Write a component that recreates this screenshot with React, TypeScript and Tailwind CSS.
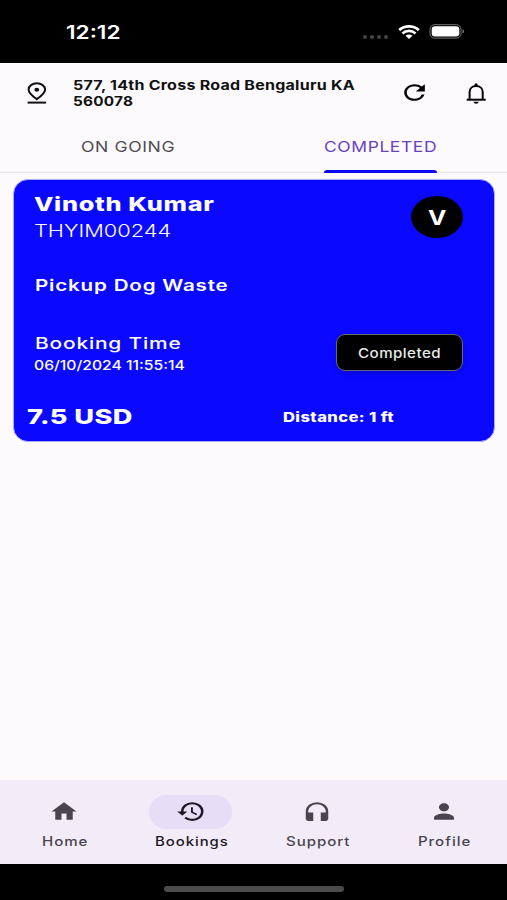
import { useLayoutEffect, useRef, useState } from "react";
import { MdHeadphones, MdHistory, MdHome, MdPerson, MdRefresh } from "react-icons/md";

// Text set in an extended width: the line is stretched to fill its box.
function WideText({ text, className }: { text: string; className: string }) {
  const box = useRef<HTMLSpanElement>(null);
  const inner = useRef<HTMLSpanElement>(null);
  const [scale, setScale] = useState(1);

  useLayoutEffect(() => {
    if (box.current && inner.current) {
      setScale(box.current.offsetWidth / inner.current.offsetWidth);
    }
  }, [text]);

  return (
    <span ref={box} className={`flex shrink-0 whitespace-nowrap ${className}`}>
      <span ref={inner} className="shrink-0 origin-left" style={{ transform: `scaleX(${scale})` }}>
        {text}
      </span>
    </span>
  );
}

function StatusBar() {
  return (
    <div className="flex h-[63px] shrink-0 items-center bg-black pl-[66px] pr-[42px] text-white">
      <WideText text="12:12" className="mt-[2px] w-[54px] text-[18px] font-semibold leading-6" />
      <div className="ml-auto flex items-center">
        <div className="mr-[10px] mt-[10px] flex gap-[3px]">
          {[0, 1, 2, 3].map((i) => (
            <span key={i} className="h-1 w-1 rounded-full bg-[#444444]" />
          ))}
        </div>
        <svg className="mr-[9px] h-[14px] w-[22px]" viewBox="0 0 22 14" fill="none" stroke="white" strokeWidth="2.8">
          <path d="M1.2 5.1C6.8 .2 15.2 .2 20.8 5.1" />
          <path d="M4.5 8.5C8.2 5.1 13.8 5.1 17.5 8.5" />
          <path d="M7.5 10.8C9.6 9 12.4 9 14.5 10.8L11 14Z" fill="white" stroke="none" />
        </svg>
        <svg className="h-[15px] w-9" viewBox="0 0 36 15">
          <rect x="1" y=".7" width="31" height="13.4" rx="4.5" fill="none" stroke="#777777" />
          <rect x="2.7" y="2.2" width="27.6" height="10.4" rx="3.3" fill="white" />
          <path d="M33.5 5.3c2 .6 2 3.6 0 4.2z" fill="#777777" />
        </svg>
      </div>
    </div>
  );
}

function PinIcon() {
  return (
    <svg className="h-[22px] w-5" viewBox="0 0 20 22" fill="none" stroke="currentColor" strokeWidth="2">
      <path d="M9.8 17.2C5 14 1.6 10.8 1.6 7.6C1.6 4 5.2 1.3 9.8 1.3S18.1 4 18.1 7.6C18.1 10.8 14.6 14 9.8 17.2Z" />
      <path d="M.6 20.6H19.1" />
      <ellipse cx="9.8" cy="7.7" rx="2.4" ry="2" fill="currentColor" stroke="none" />
    </svg>
  );
}

function BellIcon() {
  return (
    <svg className="h-[21px] w-5" viewBox="0 0 20 21" fill="none" stroke="currentColor" strokeWidth="2">
      <path d="M3.6 16.4V9C3.6 5.4 6.3 3.1 10.1 3.1S16.7 5.4 16.7 9V16.4" />
      <path d="M.7 16.7H19.7" />
      <circle cx="10.1" cy="1.9" r="1.6" fill="currentColor" stroke="none" />
      <path d="M7.6 18.8h5.1c0 2.6-5.1 2.6-5.1 0z" fill="currentColor" stroke="none" />
    </svg>
  );
}

function Header() {
  return (
    <header className="flex h-[57px] shrink-0 items-center pl-[27px] pr-[21px] pt-[3px] text-[#111111]">
      <PinIcon />
      <div className="ml-[26px] text-[13px] font-bold leading-[16px] tracking-[0.2px]">
        <WideText text="577, 14th Cross Road Bengaluru KA" className="w-[282px]" />
        <WideText text="560078" className="w-[60px]" />
      </div>
      <MdRefresh className="-mt-px ml-auto h-[25px] w-[31px] text-black" preserveAspectRatio="none" />
      <div className="ml-9 text-black">
        <BellIcon />
      </div>
    </header>
  );
}

function Tabs() {
  return (
    <div className="flex h-[53px] shrink-0 border-b border-[#e6e2e8] text-[15px] leading-[53px]">
      <button className="flex flex-1 justify-center pl-px text-[#4f4a50]">
        <WideText text="ON GOING" className="w-[94px] tracking-[0.5px]" />
      </button>
      <button className="flex flex-1 flex-col items-center text-[#6743bd]">
        <WideText text="COMPLETED" className="h-[50px] w-[113px] tracking-[0.5px]" />
        <span className="h-[3px] w-[113px] shrink-0 rounded-t-[3px] bg-[#0b08f0]" />
      </button>
    </div>
  );
}

function BookingCard() {
  return (
    <section className="ml-[13px] mt-[6px] h-[263px] w-[482px] rounded-[15px] border border-[#aaa7ff] bg-[#0b08ff] pl-[13px] pr-[31px] text-white">
      <div className="flex justify-between pl-[7px]">
        <div className="pt-3">
          <WideText text="Vinoth Kumar" className="w-[181px] text-[19px] font-extrabold leading-[26px] tracking-[0.5px]" />
          <WideText text="THYIM00244" className="w-[137px] text-[17.5px] font-light leading-[26px]" />
          <WideText text="Pickup Dog Waste" className="ml-px mt-[30px] w-[194px] text-[15.5px] font-semibold leading-6 tracking-[0.6px]" />
        </div>
        <div className="mt-[16px] flex h-[42px] w-[52px] justify-center rounded-[50%] bg-black">
          <WideText text="V" className="w-[18px] text-[20.5px] font-bold leading-[43px]" />
        </div>
      </div>
      <div className="mt-[34px] flex items-start justify-between pl-[7px]">
        <div>
          <WideText text="Booking Time" className="ml-px w-[147px] text-[15.5px] font-medium leading-6 tracking-[0.6px]" />
          <WideText text="06/10/2024 11:55:14" className="mt-[-1px] w-[151px] text-[13px] font-medium leading-5" />
        </div>
        <div className="mt-[2px] flex h-[37px] w-[127px] justify-center rounded-[9px] border border-[#69676d] bg-black shadow-md">
          <WideText text="Completed" className="w-[83px] text-[13.5px] font-medium leading-[36px] tracking-[0.4px] text-[#e8e8e8]" />
        </div>
      </div>
      <div className="mt-[27px] flex items-center">
        <WideText text="7.5 USD" className="w-[106px] text-[20.5px] font-extrabold leading-7 tracking-[0.3px]" />
        <WideText text="Distance: 1 ft" className="ml-[150px] mt-px w-[111px] text-[13px] font-extrabold leading-7 tracking-[0.3px]" />
      </div>
    </section>
  );
}

const navItems = [
  { label: "Home", icon: MdHome, width: "w-[47px]" },
  { label: "Bookings", icon: MdHistory, width: "w-[74px]", active: true },
  { label: "Support", icon: MdHeadphones, width: "w-[65px]" },
  { label: "Profile", icon: MdPerson, width: "w-[53px]" },
];

function BottomNav() {
  return (
    <nav className="mt-auto flex h-[84px] shrink-0 bg-[#f2ecf8] pl-px pt-[15px]">
      {navItems.map(({ label, icon: Icon, width, active }) => (
        <button
          key={label}
          className={`flex flex-1 flex-col items-center ${active ? "text-[#1d1724]" : "text-[#49444f]"}`}
        >
          <span
            className={`flex h-[34px] w-[83px] items-center justify-center rounded-full pb-[2px] ${active ? "bg-[#e7ddf7]" : ""}`}
          >
            <Icon className="h-[25px] w-[30px]" preserveAspectRatio="none" />
          </span>
          <WideText text={label} className={`ml-[2px] mt-[3px] text-[12.5px] font-medium leading-5 tracking-[0.8px] ${width}`} />
        </button>
      ))}
    </nav>
  );
}

export default function App() {
  return (
    <div className="flex h-[900px] w-[507px] flex-col overflow-hidden bg-[#fdfafe] font-['Inter',sans-serif]">
      <StatusBar />
      <Header />
      <Tabs />
      <BookingCard />
      <BottomNav />
      <div className="flex h-9 shrink-0 justify-center bg-black pt-[22px]">
        <span className="h-[6px] w-[180px] rounded-full bg-[#4b4b4b]" />
      </div>
    </div>
  );
}
